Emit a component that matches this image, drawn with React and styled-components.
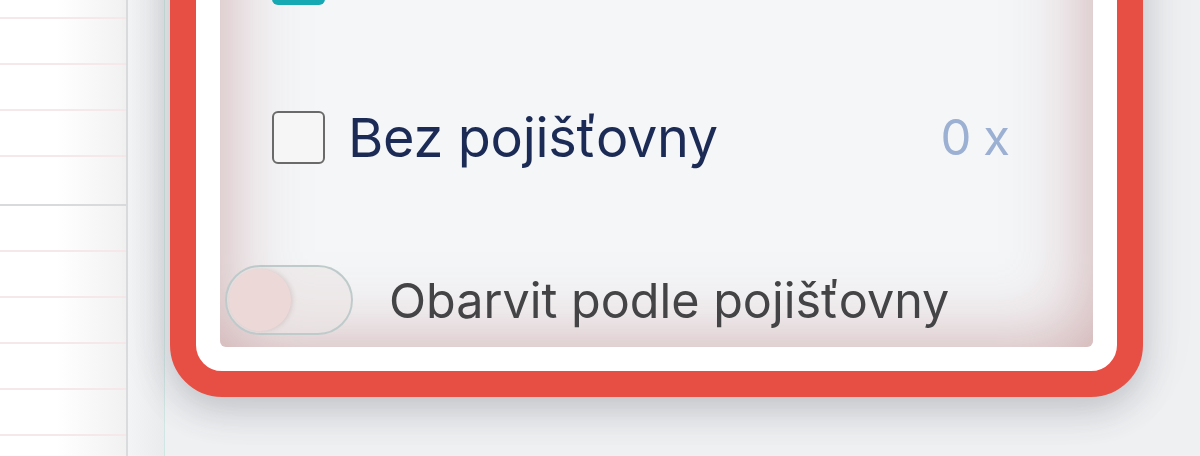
import React from 'react'
import styled, { createGlobalStyle } from 'styled-components'

const Global = createGlobalStyle`
  html, body {
    margin: 0;
    padding: 0;
    height: 456px;
    overflow: hidden;
    background: #eef0f2;
    font-family: 'Inter', 'Noto Sans', sans-serif;
  }
`;

const Page = styled.div`
  display: flex;
  height: 456px;
  overflow: hidden;
`;

const TablePane = styled.div`
  width: 126px;
  flex-shrink: 0;
  border-right: 2px solid #dadbdc;
  background: linear-gradient(to right, #ffffff 45%, #f1f1f2 100%);
  overflow: hidden;
`;

const TableRows = styled.div`
  margin-top: -27px;
`;

const TableRow = styled.div`
  height: ${p => (p.strong ? 47 : 44)}px;
  border-bottom: 2px solid ${p => (p.strong ? '#d9dadb' : '#f6e7e9')};
`;

const Strip = styled.div`
  width: 36px;
  flex-shrink: 0;
  background: linear-gradient(to right, #f3f4f5, #e9ebed);
`;

const Column = styled.div`
  flex: 1;
  border-left: 1px solid #cfe6e3;
  padding-left: 5px;
  display: flex;
  flex-direction: column;
`;

const Frame = styled.div`
  width: 873px;
  margin-top: -200px;
  border: 26px solid #e84f44;
  border-radius: 52px;
  padding: 24px;
  background: #ffffff;
  box-shadow: 0 14px 34px rgba(70, 70, 80, 0.22), 0 0 60px rgba(70, 70, 80, 0.08);
`;

const Panel = styled.div`
  border-radius: 6px;
  background: #f4f6f8;
  box-shadow: inset 0 0 80px rgba(190, 140, 140, 0.72);
  padding: 49px 83px 12px 0;
  display: flex;
  flex-direction: column;
`;

const OptionRow = styled.label`
  height: 159px;
  display: flex;
  align-items: center;
  padding-left: 52px;
`;

const Box = styled.span`
  width: 53px;
  height: 53px;
  box-sizing: border-box;
  border-radius: 6px;
  flex-shrink: 0;
  border: ${p => (p.checked ? 'none' : '2.5px solid #6a6a6a')};
  background: ${p => (p.checked ? '#17a9b3' : '#f6f6f6')};
`;

const OptionLabel = styled.span`
  margin-left: 23px;
  flex: 1;
  font-size: 54px;
  font-weight: 400;
  color: #1b2b55;
  letter-spacing: -0.3px;
`;

const Count = styled.span`
  font-size: 49px;
  word-spacing: -2px;
  color: #9cb0d3;
`;

const ToggleRow = styled.div`
  margin-top: 48px;
  display: flex;
  align-items: center;
  padding-left: 5px;
`;

const Toggle = styled.span`
  width: 128px;
  height: 70px;
  box-sizing: border-box;
  border-radius: 35px;
  border: 2px solid #bfcbcb;
  background: rgba(235, 228, 228, 0.6);
  padding: 2px;
  display: flex;
  align-items: center;
  flex-shrink: 0;
`;

const Thumb = styled.span`
  width: 62px;
  height: 62px;
  border-radius: 50%;
  background: #ecd8d7;
  box-shadow: 2px 0 4px rgba(160, 130, 130, 0.25);
`;

const ToggleLabel = styled.span`
  margin-left: 36px;
  font-size: 48.5px;
  color: #444446;
`;

const Check = () => (
  <svg width="53" height="53" viewBox="0 0 24 24" fill="none" stroke="#fff" strokeWidth="3">
    <path d="M5 12l5 5 9-10" />
  </svg>
);

export default function App() {
  const lines = Array.from({ length: 12 }, (_, i) => i);
  return (
    <>
      <Global />
      <Page>
        <TablePane>
          <TableRows>
            {lines.map(i => (
              <TableRow key={i} strong={i === 4} />
            ))}
          </TableRows>
        </TablePane>
        <Strip />
        <Column>
          <Frame>
            <Panel>
              <OptionRow>
                <Box checked>
                  <Check />
                </Box>
              </OptionRow>
              <OptionRow>
                <Box />
                <OptionLabel>Bez pojišťovny</OptionLabel>
                <Count>0 x</Count>
              </OptionRow>
              <ToggleRow>
                <Toggle>
                  <Thumb />
                </Toggle>
                <ToggleLabel>Obarvit podle pojišťovny</ToggleLabel>
              </ToggleRow>
            </Panel>
          </Frame>
        </Column>
      </Page>
    </>
  );
}
